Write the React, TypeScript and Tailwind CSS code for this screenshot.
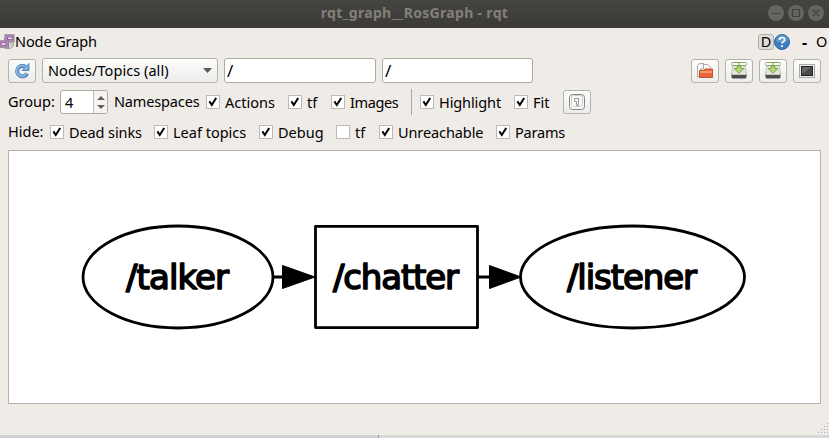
import React from "react";

const btn =
  "flex shrink-0 items-center justify-center rounded-[3px] border border-[#b5b1ab] bg-gradient-to-b from-[#fdfdfc] to-[#ececea]";

function Check({ label, width, checked = true, tracking = "" }: { label: string; width: string; checked?: boolean; tracking?: string }) {
  return (
    <label className={`flex h-[14px] shrink-0 items-center ${width}`}>
      <span className="flex h-[14px] w-[14px] shrink-0 border border-[#bdb9b4] bg-white">
        {checked && (
          <svg width="12" height="12" viewBox="0 0 12 12" fill="none">
            <path d="M2.4 5.4 L4.8 9 L9.2 2" stroke="#000" strokeWidth="2" />
          </svg>
        )}
      </span>
      <span className={`ml-[5px] leading-[14px] ${tracking}`}>{label}</span>
    </label>
  );
}

function DiskIcon() {
  return (
    <svg width="16" height="17" viewBox="0 0 16 17">
      <path d="M2 3h12l1.500 9.500H.5z" fill="#e4e4e1" stroke="#b0b0ad" strokeWidth=".7" />
      <path d="M.5 12h15v3q0 1.500-1.500 1.500H2Q.5 16.500.5 15z" fill="#4c4c4c" />
      <path d="M1 12.500h14" stroke="#c9c9c9" />
      <rect x=".5" y=".5" width="15" height="3" rx="1" fill="#f8fbf3" stroke="#83a95c" />
      <path d="M8 1v2" stroke="#83a95c" />
      <path d="M6.200 4h3.600v2.500h3L8 11.300 3.200 6.500h3z" fill="#b4d977" stroke="#6f9f3d" strokeWidth=".9" />
    </svg>
  );
}

function TitleBar() {
  return (
    <header className="relative flex h-7 items-center justify-end bg-gradient-to-b from-[#454440] to-[#3b3a36] pr-[5px]">
      <h1 className="absolute inset-x-0 top-[3px] text-center font-['Noto_Sans',sans-serif] text-[14px] leading-5 font-bold tracking-[0.32px] text-[#83807a]">
        rqt_graph__RosGraph - rqt
      </h1>
      <svg width="56" height="16" viewBox="0 0 56 16" fill="none" stroke="#3f3e39" strokeWidth="1.2" className="mt-[-2px]">
        <g fill="#66645e" stroke="none">
          <circle cx="8" cy="8" r="8" />
          <circle cx="28" cy="8" r="8" />
          <circle cx="48" cy="8" r="8" />
        </g>
        <path d="M4 8.5h8M24.5 4.5h7v7h-7zM45 5l6 6M51 5l-6 6" />
      </svg>
    </header>
  );
}

function DockBar() {
  return (
    <div className="flex h-[30px] items-center pb-[3px]">
      <svg width="15" height="16" viewBox="0 0 15 16" className="shrink-0">
        <path d="M4.500 14.500h6l3-2.500V9h-4" fill="#d5d3d1" stroke="#a3a09e" />
        <path d="M4.500 7V4.500h2" fill="none" stroke="#8b8289" />
        <rect x="5" y=".8" width="9" height="7" fill="#b28abb" stroke="#8f8292" />
        <rect x="7.500" y="3" width="5" height="2.500" fill="#f0e2f2" stroke="#8c4f9a" strokeWidth=".8" />
        <rect x="-1" y="6.800" width="9.500" height="6.500" fill="#b28abb" stroke="#8f8292" />
        <rect x="1" y="8.800" width="5" height="2.500" fill="#f0e2f2" stroke="#8c4f9a" strokeWidth=".8" />
      </svg>
      <span className="tracking-[-0.1px]">Node Graph</span>
      <span className="ml-auto flex h-4 w-4 items-center justify-center rounded-[3px] border border-[#b3afa9] bg-[#dfdbd7]">D</span>
      <svg width="16" height="16" viewBox="0 0 16 16">
        <circle cx="8" cy="8" r="7.500" fill="#3d7ebc" stroke="#2c689f" />
        <path d="M2 7a6 6 0 0 1 12 0q-6 3-12 0" fill="#5f99cc" />
        <path d="M5.500 6q0-2.500 2.600-2.500T10.600 5.900C10.600 7.500 8 7.600 8 9.600M8 11v2" fill="none" stroke="#fff" strokeWidth="1.600" />
      </svg>
      <span className="ml-[12px] w-[14px] text-[16px] font-bold">-</span>
      <span className="w-[13px]">O</span>
    </div>
  );
}

function Toolbar() {
  return (
    <div className="flex h-[25px] items-center px-2">
      <button className={`${btn} h-6 w-7`}>
        <svg width="18" height="18" viewBox="0 0 18 18">
          <path d="M14 11.500A5.200 5.200 0 1 1 12.500 5" fill="none" stroke="#3c78b4" strokeWidth="4" />
          <path d="M16 1.500v7H9z" fill="#7fb0de" stroke="#3c78b4" strokeWidth=".8" />
          <path d="M13.700 11.200A5.200 5.200 0 1 1 13 5.500" fill="none" stroke="#7fb0de" strokeWidth="2.600" />
        </svg>
      </button>
      <div className={`${btn} ml-[6px] h-[25px] w-[176px] !justify-between pr-[5px] pl-[5px]`}>
        <span className="tracking-[0.05px]">Nodes/Topics (all)</span>
        <svg width="9" height="5" viewBox="0 0 9 5"><path d="M0 0h9L4.500 5z" fill="#595854" /></svg>
      </div>
      <div className="ml-[6px] flex h-[25px] w-[152px] items-center rounded-[3px] border border-[#aeaaa5] bg-white pl-[2px] text-[17px]">/</div>
      <div className="ml-[6px] flex h-[25px] w-[151px] items-center rounded-[3px] border border-[#aeaaa5] bg-white pl-[2px] text-[17px]">/</div>
      <div className="ml-auto flex gap-[6px]">
        <button className={`${btn} h-6 w-7`}>
          <svg width="18" height="18" viewBox="0 0 18 18">
            <path d="M1.500 14.500V3.500l2-2h4v2M6.500 7V2.500h5l3 3V8" fill="#f7f7f6" stroke="#a9a9a6" />
            <path d="M1.500 3.500v11h3V7h3V1.500h-4z" fill="#f7f7f6" stroke="#a9a9a6" />
            <path d="M3.500 15.500V8.500h4.500l1-1.500h7.500v8.500z" fill="#e9673c" stroke="#c9502a" />
            <path d="M4 10h12" stroke="#f9a683" strokeWidth="1.500" />
          </svg>
        </button>
        <button className={`${btn} h-6 w-7`}><DiskIcon /></button>
        <button className={`${btn} h-6 w-7`}><DiskIcon /></button>
        <button className={`${btn} h-6 w-7`}>
          <svg width="16" height="14" viewBox="0 0 16 14">
            <rect x=".5" y=".5" width="15" height="13" fill="#eee" stroke="#aaa" />
            <rect x="2.500" y="2.500" width="11" height="9" fill="#484848" stroke="#222" />
            <path d="M3 3h10L3 10z" fill="#666" />
          </svg>
        </button>
      </div>
    </div>
  );
}

function Graph() {
  return (
    <svg width="811" height="252" viewBox="9 151 811 252" className="block">
      <g fill="none" stroke="#000" strokeWidth="2.800">
        <ellipse cx="178" cy="277" rx="95" ry="51" />
        <rect x="315.500" y="226.300" width="162" height="101.300" strokeLinejoin="round" />
        <ellipse cx="632.500" cy="277" rx="112" ry="51" />
        <path d="M273 277h12M478 277h14" />
      </g>
      <path d="M282.500 265.500L315 277l-32.500 11.500zM489.500 265.500L521 277l-31.500 11.500z" stroke="#000" />
      <g className="font-['DejaVu_Sans',sans-serif] text-[34px]" stroke="#000" strokeWidth="1.600" strokeLinejoin="round">
        <text x="126" y="289.300" textLength="103" lengthAdjust="spacing">/talker</text>
        <text x="333" y="289.300" textLength="126" lengthAdjust="spacing">/chatter</text>
        <text x="567" y="289.300" textLength="130" lengthAdjust="spacing">/listener</text>
      </g>
    </svg>
  );
}

export default function App() {
  return (
    <div className="flex h-[438px] w-[829px] flex-col overflow-hidden bg-[#efebe7] font-['Noto_Sans',sans-serif] text-[14.5px] whitespace-nowrap text-black">
      <TitleBar />
      <DockBar />
      <Toolbar />
      <div className="mt-[6px] flex h-[26px] items-center px-2">
        <span className="w-[52px]">Group:</span>
        <div className="flex h-6 w-12 rounded-[3px] border border-[#aeaaa5] bg-white">
          <span className="flex w-8 items-center pt-px pl-[4px]">4</span>
          <span className="flex flex-1 flex-col items-center justify-center gap-[5px] rounded-r-[2px] border-l border-[#c3bfba] bg-[#f5f4f2]">
            <svg width="8" height="4" viewBox="0 0 8 4"><path d="M0 4h8L4 0z" fill="#62605c" /></svg>
            <svg width="8" height="4" viewBox="0 0 8 4"><path d="M0 0h8L4 4z" fill="#62605c" /></svg>
          </span>
        </div>
        <span className="ml-[6px] w-[92px] tracking-[-0.15px]">Namespaces</span>
        <Check label="Actions" width="w-[82px]" />
        <Check label="tf" width="w-[43px]" />
        <Check label="Images" width="w-[80px]" tracking="tracking-[-0.4px]" />
        <span className="mr-[8px] h-[26px] w-px bg-[#aaa6a1]" />
        <Check label="Highlight" width="w-[94px]" tracking="tracking-[-0.1px]" />
        <Check label="Fit" width="w-[49px]" />
        <button className={`${btn} h-6 w-7`}>
          <svg width="16" height="16" viewBox="0 0 16 16" fill="#f8f8f7" stroke="#858585" strokeWidth="1">
            <rect x=".5" y=".5" width="15" height="15" rx="3" />
            <rect x="2.500" y="1.500" width="11" height="11" rx="2" stroke="#cfcfcf" />
            <path d="M5.500 4.500h4v7h-2v-4h-2z" stroke="#999" />
          </svg>
        </button>
      </div>
      <div className="mt-[4px] flex h-[26px] items-center px-2">
        <span className="w-[42px]">Hide:</span>
        <Check label="Dead sinks" width="w-[104px]" tracking="tracking-[-0.1px]" />
        <Check label="Leaf topics" width="w-[105px]" />
        <Check label="Debug" width="w-[77px]" />
        <Check label="tf" width="w-[43px]" checked={false} />
        <Check label="Unreachable" width="w-[117px]" tracking="tracking-[-0.1px]" />
        <Check label="Params" width="w-[80px]" tracking="tracking-[-0.2px]" />
      </div>
      <main className="mx-2 mt-[5px] h-[254px] border border-[#b5b2ae] bg-white">
        <Graph />
      </main>
      <div className="flex h-[31px] items-end justify-end">
        <svg width="11" height="12" viewBox="0 0 11 12" fill="#aaa6a1">
          <path d="M9 0h1v1H9zM6 3h1v1H6zM9 3h1v1H9zM3 6h1v1H3zM6 6h1v1H6zM9 6h1v1H9zM0 9h1v1H0zM3 9h1v1H3zM6 9h1v1H6zM9 9h1v1H9z" />
        </svg>
      </div>
      <footer className="flex h-[3px]">
        <span className="w-[379px] border-r border-[#9799a5] bg-[#d1d2d5]" />
        <span className="flex-1 bg-[#d8d8d8]" />
      </footer>
    </div>
  );
}
